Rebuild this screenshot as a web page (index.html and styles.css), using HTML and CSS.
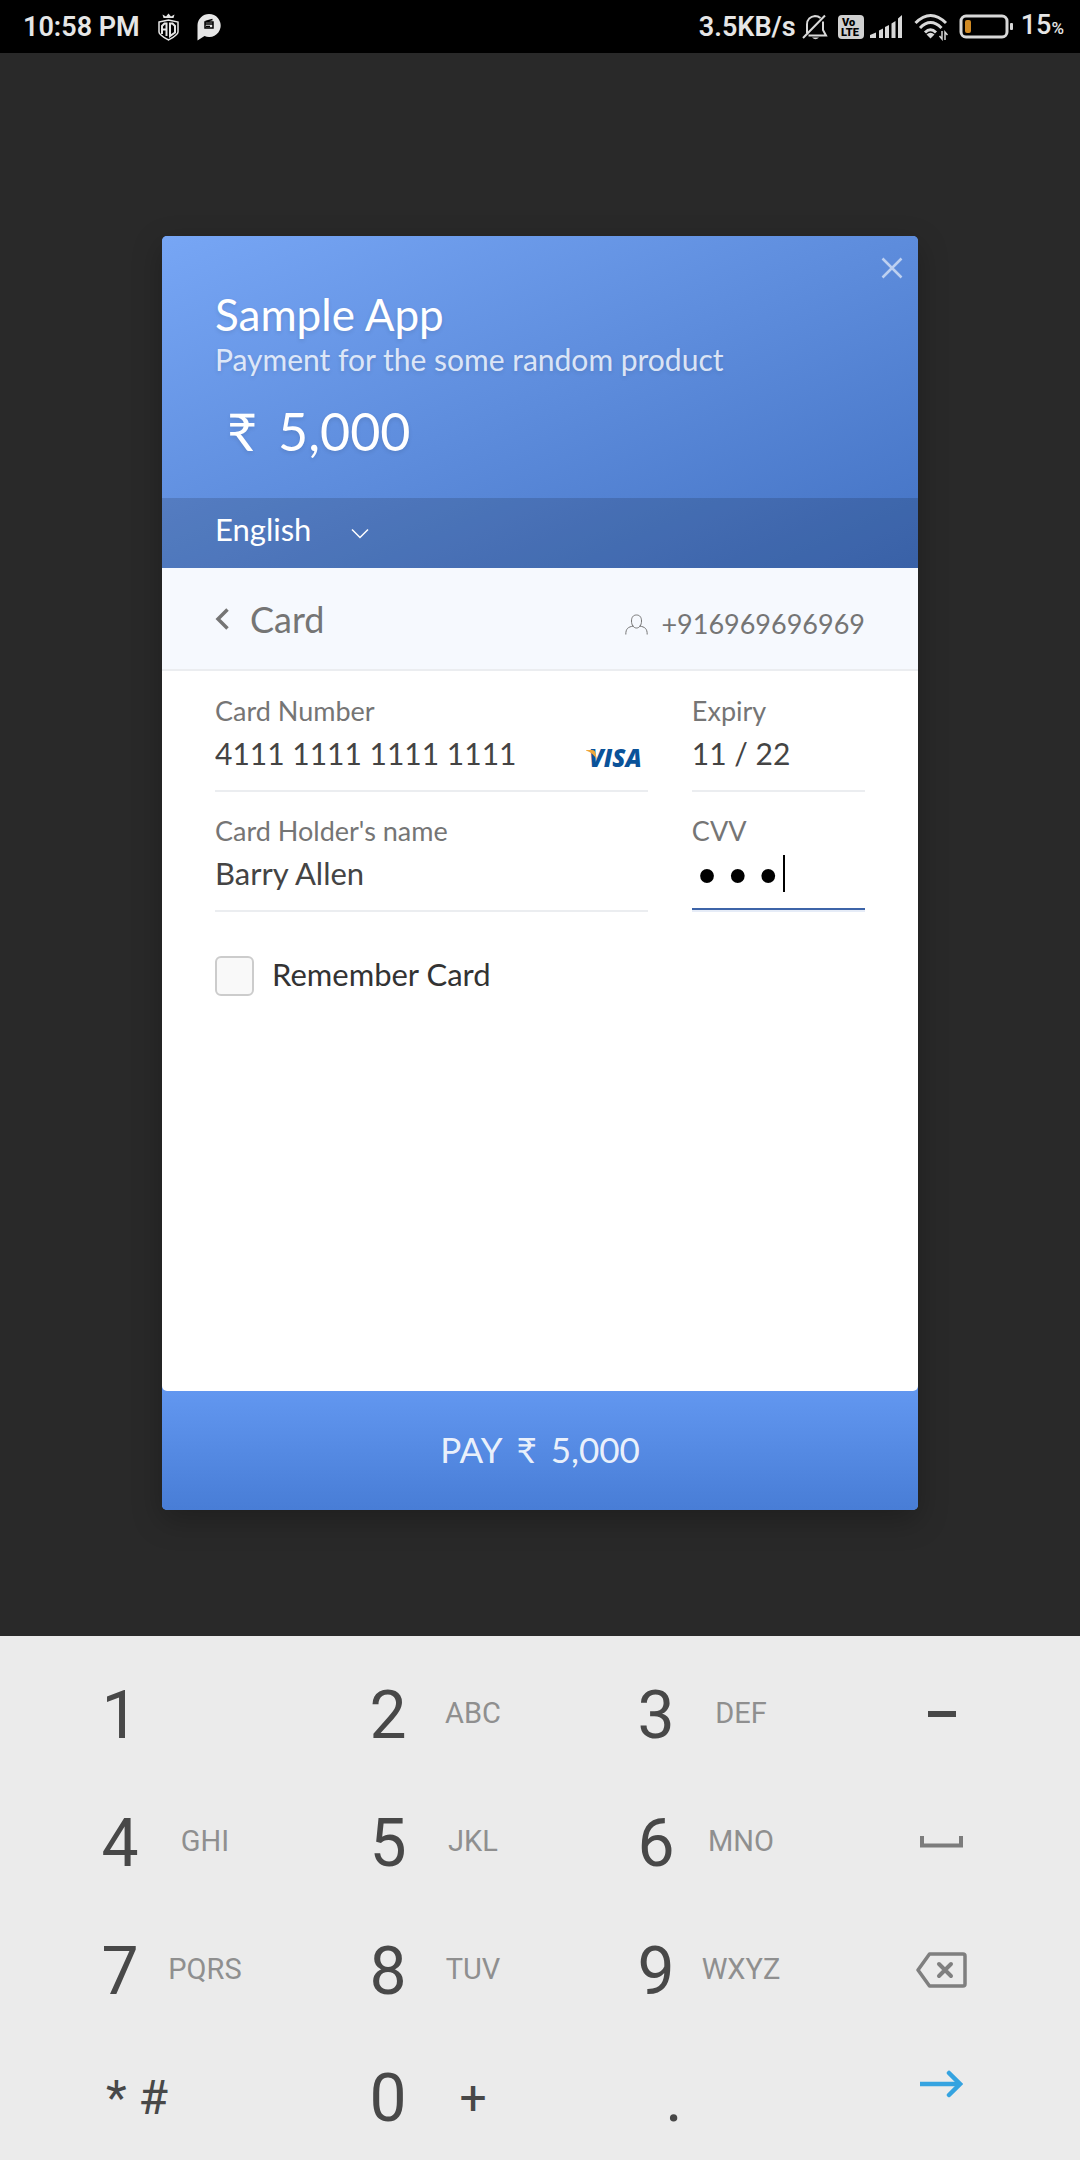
FILE: index.html
```html
<!DOCTYPE html>
<html lang="en">
<head>
<meta charset="utf-8">
<meta name="viewport" content="width=device-width, initial-scale=1">
<title>Sample App – Card payment</title>
<link rel="stylesheet" href="styles.css">
</head>
<body>
<header class="status">
  <div class="status-left">
    <span class="clock">10:58 PM</span>
    <svg class="shield" width="21" height="28" viewBox="0 0 21 28" fill="none" stroke="#e6e6e6" stroke-width="1.5">
      <path d="M5.500 5 4.500 1.500 8 3.500 10.500.500 13 3.500 16.500 1.500 15.500 5Z" fill="#e6e6e6" stroke="none"/>
      <path d="M1 9 10.500 7 20 9V19C20 22 15 24.500 10.500 27 6 24.500 1 22 1 19Z"/>
      <path d="M4 21V13L6.500 10.500H8.500V23M4 16.500H8.500" stroke-width="2"/>
      <path d="M12 10.500V23L17 19.500V13L14.500 10.500Z" stroke-width="2"/>
    </svg>
    <svg class="bubble" width="24" height="28" viewBox="0 0 24 28">
      <path d="M12 1a11.500 11.500 0 1 1-4.500 22L.500 27.500V12A11.500 11.500 0 0 1 12 1Z" fill="#e6e6e6"/>
      <path d="M8 9H16V15H8ZM8.500 8.500 15.500 6.500" fill="none" stroke="#000" stroke-width="1.500"/>
      <path d="M8 11h8M9 13.500h4" stroke="#000" stroke-width="1.500"/>
    </svg>
  </div>
  <div class="status-right">
    <span class="speed">3.5KB/s</span>
    <svg class="bell" width="26" height="28" viewBox="0 0 26 28" fill="none" stroke="#d8d8d8" stroke-width="2">
      <path d="M1 25 23 2.500M5 20V11.500C5 6.500 8.500 3.500 13 3 15 3 17 3.700 18.500 5M21 8.500V17L24 22.500H6.500"/>
      <path d="M10 24.500H17Q13.500 28 10 24.500Z" fill="#d8d8d8" stroke="none"/>
    </svg>
    <svg class="volte" width="26" height="24" viewBox="0 0 26 24">
      <rect width="26" height="24" rx="4" fill="#d0d0d0"/>
      <text class="volte-text" x="4" y="11">Vo</text>
      <text class="volte-text" x="3" y="21">LTE</text>
    </svg>
    <svg class="signal" width="33" height="24" viewBox="0 0 33 24" fill="#d8d8d8">
      <path d="M0 23V20L6 17.500V23ZM9 23V15.500L13 13.500V23ZM15 23V12L19 10V23ZM21.500 23V8.500L25.500 6V23ZM28 23V3.500L32 0V23Z"/>
    </svg>
    <svg class="wifi" width="34" height="28" viewBox="0 0 34 28" fill="none" stroke="#d8d8d8" stroke-width="3">
      <path d="M1.500 10Q16.500-5 32 10M6 15Q16.500 4 27.500 15M11 19.500Q16.500 14 22 19.500"/>
      <path d="M12.500 21.500Q16.500 18 20.500 21.500L16.500 25.500Z" fill="#d8d8d8" stroke="none"/>
      <path d="M28 18V26L25.500 23M31 27V19L33.500 22" stroke-width="1.500"/>
    </svg>
    <svg class="battery" width="55" height="25" viewBox="0 0 55 25">
      <rect x="2" y="2" width="46" height="21" rx="5" fill="none" stroke="#d8d8d8" stroke-width="3"/>
      <rect x="6" y="6" width="6" height="13" rx="2" fill="#d08a24"/>
      <rect x="51" y="9" width="3" height="7" rx="1" fill="#d8d8d8"/>
    </svg>
    <span class="charge">15<small>%</small></span>
  </div>
</header>

<main class="stage">
  <form class="checkout" onsubmit="return false">
    <div class="merchant">
      <button class="close" type="button" aria-label="Close">
        <svg width="22" height="22" viewBox="0 0 22 22"><path d="M1.500 1.500 20.500 20.500M20.500 1.500 1.500 20.500" stroke="currentColor" stroke-width="2.500"/></svg>
      </button>
      <div class="merchant-info">
        <h1 class="merchant-name">Sample App</h1>
        <p class="merchant-desc">Payment for the some random product</p>
        <p class="amount"><span class="rupee">₹</span><span>5,000</span></p>
      </div>
      <div class="language">
        <select class="language-select" aria-label="Language"><option>English</option></select>
        <svg class="chevron" width="18" height="11" viewBox="0 0 18 11" fill="none"><path d="M1 1.500 9 9.500 17 1.500" stroke="#fff" stroke-width="1.500"/></svg>
      </div>
    </div>

    <div class="panel">
      <div class="topbar">
        <button class="back" type="button">
          <svg width="14" height="22" viewBox="0 0 14 22" fill="none"><path d="M12.500 1.500 3 11 12.500 20.500" stroke="currentColor" stroke-width="3.500"/></svg>
          <span>Card</span>
        </button>
        <div class="account">
          <svg width="23" height="21" viewBox="0 0 23 21" fill="none" stroke="#757575" stroke-width="1">
            <path d="M11.500 1C8 1 6.500 3.500 6.500 7 6.500 11 8.500 14 11.500 14S16.500 11 16.500 7C16.500 3.500 15 1 11.500 1ZM.800 20.500C.800 14.500 3 13 8.500 12M22.200 20.500C22.200 14.500 20 13 14.500 12"/>
          </svg>
          <span>+916969696969</span>
        </div>
      </div>

      <div class="body">
        <div class="fields">
          <div class="field">
            <label for="number">Card Number</label>
            <div class="with-brand">
              <input id="number" class="numeric" type="text" inputmode="numeric" value="4111 1111 1111 1111">
              <svg class="visa" width="56" height="28" viewBox="0 0 56 28" role="img" aria-label="Visa">
                <text class="visa-text" x="3" y="22">VISA</text>
                <path d="M0 5H6Q9 5 9.500 8L11 15Q7.500 8 0 5.500Z" fill="#f0a83c"/>
              </svg>
            </div>
          </div>
          <div class="field">
            <label for="expiry">Expiry</label>
            <input id="expiry" class="numeric" type="text" value="11 / 22">
          </div>
          <div class="field">
            <label for="holder">Card Holder's name</label>
            <input id="holder" type="text" value="Barry Allen">
          </div>
          <div class="field field-active">
            <label for="cvv">CVV</label>
            <input id="cvv" class="cvv" type="password" value="123">
            <span class="caret"></span>
          </div>
        </div>
        <label class="remember"><input type="checkbox"><span>Remember Card</span></label>
      </div>
    </div>

    <button class="pay" type="submit"><span>PAY</span><span class="rupee">₹</span><span>5,000</span></button>
  </form>
</main>

<section class="keypad" aria-label="Numeric keyboard">
  <button class="key" type="button"><span class="digit">1</span></button>
  <button class="key" type="button"><span class="digit">2</span><span class="letters">ABC</span></button>
  <button class="key" type="button"><span class="digit">3</span><span class="letters">DEF</span></button>
  <button class="key key-icon" type="button" aria-label="Minus">
    <svg width="28" height="6" viewBox="0 0 28 6"><path d="M0 3H28" stroke="#484848" stroke-width="6"/></svg>
  </button>
  <button class="key" type="button"><span class="digit">4</span><span class="letters">GHI</span></button>
  <button class="key" type="button"><span class="digit">5</span><span class="letters">JKL</span></button>
  <button class="key" type="button"><span class="digit">6</span><span class="letters">MNO</span></button>
  <button class="key key-icon" type="button" aria-label="Space">
    <svg width="43" height="12" viewBox="0 0 43 12" fill="none"><path d="M2 0V9.500H41V0" stroke="#7c7c7c" stroke-width="4"/></svg>
  </button>
  <button class="key" type="button"><span class="digit">7</span><span class="letters">PQRS</span></button>
  <button class="key" type="button"><span class="digit">8</span><span class="letters">TUV</span></button>
  <button class="key" type="button"><span class="digit">9</span><span class="letters">WXYZ</span></button>
  <button class="key key-icon" type="button" aria-label="Backspace">
    <svg width="51" height="36" viewBox="0 0 51 36" fill="none" stroke="#7f7f7f" stroke-width="3.500" stroke-linejoin="round">
      <path d="M2 18 13.500 2H47Q49 2 49 4V32Q49 34 47 34H13.500Z"/>
      <path d="M23 12 35 24M35 12 23 24" stroke-width="4" stroke-linecap="round"/>
    </svg>
  </button>
  <button class="key key-symbols" type="button"><span class="symbol">* #</span></button>
  <button class="key" type="button"><span class="digit">0</span><span class="letters symbol">+</span></button>
  <button class="key key-dot" type="button"><span class="digit">.</span></button>
  <button class="key key-icon key-next" type="button" aria-label="Next">
    <svg width="43" height="28" viewBox="0 0 43 28" fill="none" stroke="#35a3e0" stroke-width="4.500"><path d="M0 14H39"/><path d="M29 3 40 14 29 25" stroke-linecap="round"/></svg>
  </button>
</section>
</body>
</html>
```
FILE: styles.css
```css
* { box-sizing: border-box; }

body {
  margin: 0;
  min-height: 100vh;
  display: flex;
  flex-direction: column;
  background: #292929;
  font-family: Lato, "Liberation Sans", sans-serif;
}

h1, p { margin: 0; font-weight: 400; }
svg { display: block; flex: none; }

button, input, select {
  margin: 0;
  padding: 0;
  border: 0;
  background: none;
  color: inherit;
  font: inherit;
}

/* Status bar */
.status {
  display: flex;
  justify-content: space-between;
  align-items: center;
  height: 53px;
  padding: 0 16px 0 23px;
  background: #000;
  color: #e6e6e6;
  font: 500 27px/32px Roboto, sans-serif;
}
.status-left, .status-right { display: flex; align-items: center; }
.clock { font-weight: 600; }
.speed { font-weight: 600; }
.shield { margin-left: 18px; }
.bubble { margin-left: 18px; }
.bell { margin-left: 6px; }
.volte { margin-left: 10px; }
.signal { margin-left: 6px; }
.wifi { margin-left: 11px; }
.battery { margin-left: 11px; }
.charge { margin-left: 7px; }
.charge small { font-size: 17px; }
.volte-text { font: 900 11px Roboto, sans-serif; fill: #000; }

/* Checkout */
.stage { flex: 1; padding: 183px 15% 126px; }

.checkout {
  border-radius: 5px;
  background: #6297f0;
  box-shadow: 0 10px 30px rgba(0, 0, 0, .25);
}

.merchant {
  position: relative;
  border-radius: 5px 5px 0 0;
  background: linear-gradient(to bottom right, #77a6f5, #4372c3);
  color: #fff;
}
.close {
  position: absolute;
  top: 21px;
  right: 15px;
  color: rgba(255, 255, 255, .6);
}
.merchant-info {
  padding: 51px 53px 36px;
  text-shadow: 0 2px 4px rgba(0, 0, 0, .1);
}
.merchant-name { font-size: 44px; line-height: 54px; }
.merchant-desc { font-size: 30px; line-height: 36px; color: rgba(255, 255, 255, .8); }
.amount {
  display: flex;
  gap: 21px;
  margin-top: 23px;
  padding-left: 12px;
  font-size: 52px;
  line-height: 62px;
}
.language {
  display: flex;
  align-items: center;
  gap: 39px;
  height: 70px;
  padding: 0 53px 8px;
  background: rgba(0, 0, 0, .14);
}
.language-select { appearance: none; font-size: 31px; line-height: 36px; }
.chevron { margin-top: 8px; }

.panel { border-radius: 0 0 5px 5px; background: #fff; }

.topbar {
  display: flex;
  justify-content: space-between;
  align-items: center;
  height: 103px;
  padding: 0 53px;
  border-bottom: 2px solid #ebedf0;
  background: #f6f9fe;
  color: #757575;
}
.back { display: flex; align-items: center; gap: 21px; font-size: 36px; line-height: 42px; }
.account { display: flex; align-items: center; gap: 13px; padding-top: 11px; font-size: 27px; line-height: 34px; }

.body { min-height: 720px; padding: 22px 53px; }
.fields { display: grid; grid-template-columns: 5fr 2fr; gap: 21px 44px; }
.field {
  position: relative;
  display: flex;
  flex-direction: column;
  min-width: 0;
  padding-bottom: 11px;
  border-bottom: 2px solid #ebedf0;
}
.field label { font-size: 27px; line-height: 36px; color: #757575; }
.field input {
  width: 100%;
  height: 50px;
  padding-bottom: 2px;
  font-size: 31px;
  color: #444;
  outline: none;
}
.field .numeric { font-size: 30px; }
.with-brand { display: flex; align-items: center; padding-right: 6px; }
.with-brand input { flex: 1; min-width: 0; }
.visa { margin-top: 9px; overflow: visible; }
.visa-text { font: italic 800 24px "Open Sans", sans-serif; fill: #0a5299; }

.field-active { padding-bottom: 9px; box-shadow: inset 0 -2px #3d64a8; border-color: #e6ecf7; }
.field .cvv { height: 52px; padding: 8px 0 0; font: 51px/44px "Liberation Mono", monospace; color: #000; }
.caret { position: absolute; left: 91px; top: 42px; width: 2px; height: 37px; background: #000; }

.remember {
  display: flex;
  align-items: center;
  gap: 18px;
  margin-top: 44px;
  font-size: 31px;
  line-height: 36px;
  color: #333;
}
.remember input {
  appearance: none;
  width: 39px;
  height: 40px;
  border: 2px solid #ccc;
  border-radius: 6px;
  background: #f9f9f9;
}
.remember span { padding-bottom: 4px; }

.pay {
  display: flex;
  justify-content: center;
  align-items: center;
  gap: 14px;
  width: 100%;
  height: 119px;
  padding-bottom: 3px;
  border-radius: 0 0 5px 5px;
  background: linear-gradient(#6297f0, #487dd6);
  color: rgba(255, 255, 255, .9);
  font-size: 35px;
  line-height: 42px;
}

/* Keyboard */
.keypad {
  display: grid;
  grid-template-columns: 268fr 268fr 268fr 220fr;
  grid-template-rows: repeat(3, 128px) 125px;
  padding: 15px 28px 0;
  background: #ebebeb;
  font-family: Roboto, sans-serif;
  color: #484848;
}
.key { display: flex; align-items: center; padding-left: 62px; }
.digit { width: 60px; padding-top: 2px; font-size: 66px; line-height: 78px; text-align: center; }
.letters { width: 110px; padding-bottom: 4px; font-size: 29px; line-height: 36px; text-align: center; color: #8f8f8f; }
.symbol { padding-bottom: 0; font-size: 48px; line-height: 56px; color: #484848; }
.key-symbols { padding-left: 78px; }
.key-dot { padding-left: 80px; }
.key-icon { justify-content: center; padding: 0 1px 3px 0; }
.key-next { padding-bottom: 28px; }
```
